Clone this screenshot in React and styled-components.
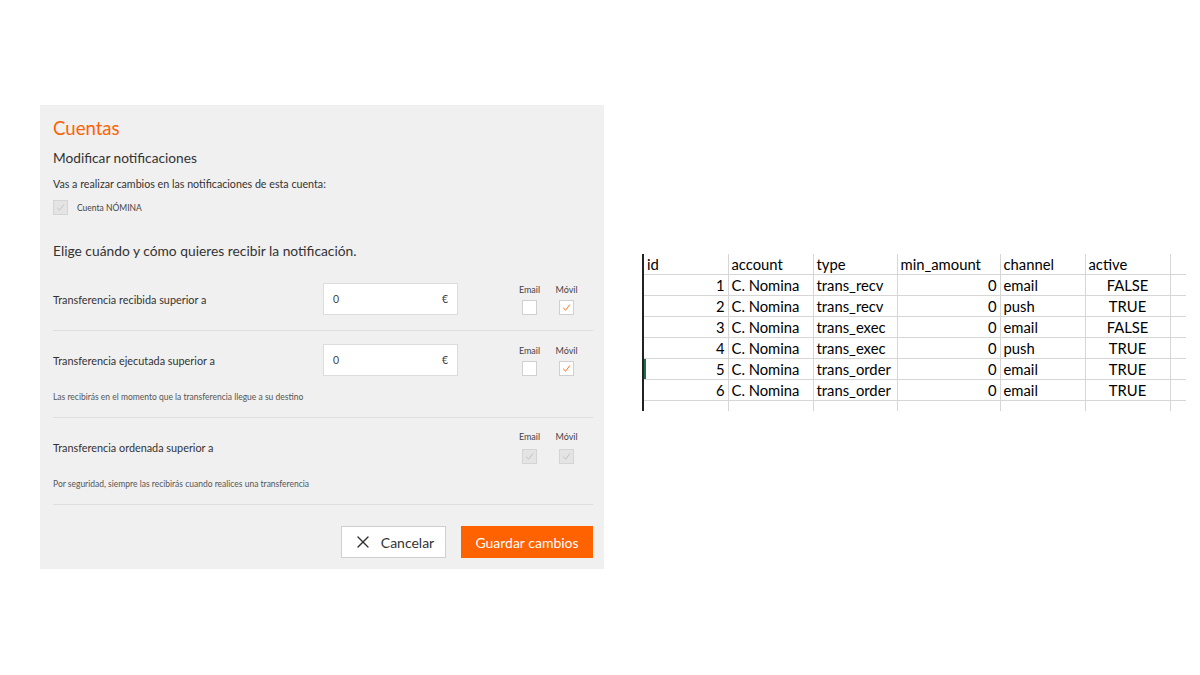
import React from 'react';
import styled, { createGlobalStyle } from 'styled-components';
import { X } from 'lucide-react';

const GlobalStyle = createGlobalStyle`
  html, body { margin: 0; padding: 0; background: #fff; }
  body { font-family: 'Lato', 'Noto Sans', sans-serif; }
`;

const Page = styled.div`
  width: 1200px;
  height: 675px;
  display: flex;
  align-items: flex-start;
  padding-left: 40px;
  gap: 38px;
  box-sizing: border-box;
`;

const Panel = styled.section`
  margin-top: 105px;
  width: 564px;
  box-sizing: border-box;
  background: #f0f0f0;
  padding: 11px 11px 11px 13px;
  color: #333;
`;

const Title = styled.h2`
  margin: 0;
  font-size: 18.6px;
  line-height: 24px;
  font-weight: 400;
  color: #ff6200;
`;

const Subtitle = styled.h3`
  margin: 8px 0 0;
  font-size: 13.7px;
  line-height: 20px;
  font-weight: 400;
  color: #333;
`;

const Intro = styled.p`
  margin: 9px 0 0;
  font-size: 10.7px;
  line-height: 14px;
  color: #333;
`;

const AccountRow = styled.label`
  display: flex;
  align-items: center;
  gap: 9px;
  margin-top: 9px;
  font-size: 8.5px;
  color: #444;
`;

const Heading = styled.h3`
  margin: 26px 0 7px;
  font-size: 13.8px;
  line-height: 20px;
  font-weight: 400;
  color: #333;
`;

const NotifRow = styled.div`
  border-bottom: 1px solid #dedede;
  padding: ${p => p.$top}px 0 15px;
`;

const RowMain = styled.div`
  display: grid;
  grid-template-columns: 270px 135px 1fr auto;
  align-items: center;
`;

const RowLabel = styled.span`
  font-size: 10.85px;
  color: #333;
`;

const AmountBox = styled.div`
  grid-column: 2;
  height: 32px;
  box-sizing: border-box;
  background: #fff;
  border: 1px solid #dcdcdc;
  display: flex;
  align-items: center;
  justify-content: space-between;
  padding: 0 9px;
  font-size: 10.5px;
  color: #444;
`;

const Channels = styled.div`
  grid-column: 4;
  display: flex;
  margin-right: 8px;
`;

const Channel = styled.div`
  width: 37px;
  display: flex;
  flex-direction: column;
  align-items: center;
  gap: ${p => (p.$gap ? `${p.$gap}px` : '3px')};
  font-size: 9px;
  line-height: 14px;
  color: #444;
`;

const Box = styled.span`
  width: 15px;
  height: 15px;
  box-sizing: border-box;
  display: flex;
  align-items: center;
  justify-content: center;
  background: ${p => (p.$disabled ? '#e4e4e4' : '#fff')};
  border: 1px solid ${p => (p.$disabled ? '#d4d4d4' : '#d0d0d0')};
`;

const Helper = styled.p`
  margin: ${p => p.$gap}px 0 0;
  font-size: 8.5px;
  line-height: 10px;
  color: #555;
`;

const Footer = styled.div`
  display: flex;
  justify-content: flex-end;
  gap: 15px;
  margin-top: 21px;
`;

const CancelButton = styled.button`
  width: 105px;
  height: 32px;
  background: #fff;
  border: 1px solid #cfcfcf;
  display: flex;
  align-items: center;
  justify-content: center;
  gap: 8px;
  font-family: inherit;
  font-size: 14px;
  color: #333;
  padding: 0;
`;

const SaveButton = styled.button`
  width: 132px;
  height: 32px;
  background: #ff6200;
  border: none;
  color: #fff;
  font-family: inherit;
  font-size: 14px;
  padding: 0;
`;

const Sheet = styled.table`
  margin-top: 254px;
  border-collapse: collapse;
  border-left: 2px solid #222;
  font-family: 'Lato', 'Liberation Sans', sans-serif;
  font-size: 14.8px;
  color: #000;
  table-layout: fixed;
`;

const Cell = styled.td`
  height: 20px;
  padding: 0 3px;
  line-height: 20px;
  box-sizing: border-box;
  border-right: ${p => (p.$last ? 'none' : '1px solid #d6d6d6')};
  border-bottom: 1px solid #d6d6d6;
  text-align: ${p => p.$align || 'left'};
  white-space: nowrap;
  overflow: hidden;
  &:first-child {
    box-shadow: ${p => (p.$selected ? 'inset 2px 0 0 #1e7145' : 'none')};
  }
`;

const EmptyCell = styled.td`
  height: 10px;
  padding: 0;
  border-right: ${p => (p.$last ? 'none' : '1px solid #d6d6d6')};
`;

const Check = ({ color }) => (
  <svg width="9" height="9" viewBox="0 0 10 10">
    <path d="M1.5 5.5 L4 8 L8.5 2" fill="none" stroke={color} strokeWidth="1" strokeLinecap="round" strokeLinejoin="round" />
  </svg>
);

const CheckBox = ({ checked, disabled }) => (
  <Box $disabled={disabled}>
    {checked && <Check color={disabled ? '#bdbdbd' : '#ff6200'} />}
  </Box>
);

const ChannelPair = ({ email, mobile, disabled, gap }) => (
  <Channels>
    <Channel $gap={gap}>
      Email
      <CheckBox checked={email} disabled={disabled} />
    </Channel>
    <Channel $gap={gap}>
      Móvil
      <CheckBox checked={mobile} disabled={disabled} />
    </Channel>
  </Channels>
);

const columns = [
  { key: 'id', width: 85, align: 'right' },
  { key: 'account', width: 85 },
  { key: 'type', width: 84 },
  { key: 'min_amount', width: 103, align: 'right' },
  { key: 'channel', width: 85 },
  { key: 'active', width: 85, align: 'center' },
];

const rows = [
  { id: 1, account: 'C. Nomina', type: 'trans_recv', min_amount: 0, channel: 'email', active: 'FALSE' },
  { id: 2, account: 'C. Nomina', type: 'trans_recv', min_amount: 0, channel: 'push', active: 'TRUE' },
  { id: 3, account: 'C. Nomina', type: 'trans_exec', min_amount: 0, channel: 'email', active: 'FALSE' },
  { id: 4, account: 'C. Nomina', type: 'trans_exec', min_amount: 0, channel: 'push', active: 'TRUE' },
  { id: 5, account: 'C. Nomina', type: 'trans_order', min_amount: 0, channel: 'email', active: 'TRUE', selected: true },
  { id: 6, account: 'C. Nomina', type: 'trans_order', min_amount: 0, channel: 'email', active: 'TRUE' },
];

export default function App() {
  return (
    <Page>
      <GlobalStyle />
      <Panel>
        <Title>Cuentas</Title>
        <Subtitle>Modificar notificaciones</Subtitle>
        <Intro>Vas a realizar cambios en las notificaciones de esta cuenta:</Intro>
        <AccountRow>
          <CheckBox checked disabled />
          Cuenta NÓMINA
        </AccountRow>
        <Heading>Elige cuándo y cómo quieres recibir la notificación.</Heading>

        <NotifRow $top={15}>
          <RowMain>
            <RowLabel>Transferencia recibida superior a</RowLabel>
            <AmountBox><span>0</span><span>€</span></AmountBox>
            <ChannelPair mobile />
          </RowMain>
        </NotifRow>

        <NotifRow $top={13}>
          <RowMain>
            <RowLabel>Transferencia ejecutada superior a</RowLabel>
            <AmountBox><span>0</span><span>€</span></AmountBox>
            <ChannelPair mobile />
          </RowMain>
          <Helper $gap={16}>Las recibirás en el momento que la transferencia llegue a su destino</Helper>
        </NotifRow>

        <NotifRow $top={12}>
          <RowMain>
            <RowLabel>Transferencia ordenada superior a</RowLabel>
            <ChannelPair email mobile disabled gap={5} />
          </RowMain>
          <Helper $gap={15}>Por seguridad, siempre las recibirás cuando realices una transferencia</Helper>
        </NotifRow>

        <Footer>
          <CancelButton>
            <X size={20} strokeWidth={1.6} color="#333" />
            Cancelar
          </CancelButton>
          <SaveButton>Guardar cambios</SaveButton>
        </Footer>
      </Panel>

      <Sheet>
        <colgroup>
          {columns.map(c => <col key={c.key} style={{ width: c.width }} />)}
          <col style={{ width: 16 }} />
        </colgroup>
        <thead>
          <tr>
            {columns.map(c => <Cell as="th" key={c.key} style={{ fontWeight: 400 }}>{c.key}</Cell>)}
            <Cell as="th" $last />
          </tr>
        </thead>
        <tbody>
          {rows.map(r => (
            <tr key={r.id}>
              {columns.map(c => (
                <Cell key={c.key} $align={c.align} $selected={r.selected}>{r[c.key]}</Cell>
              ))}
              <Cell $last />
            </tr>
          ))}
          <tr>
            {columns.map(c => <EmptyCell key={c.key} />)}
            <EmptyCell $last />
          </tr>
        </tbody>
      </Sheet>
    </Page>
  );
}
